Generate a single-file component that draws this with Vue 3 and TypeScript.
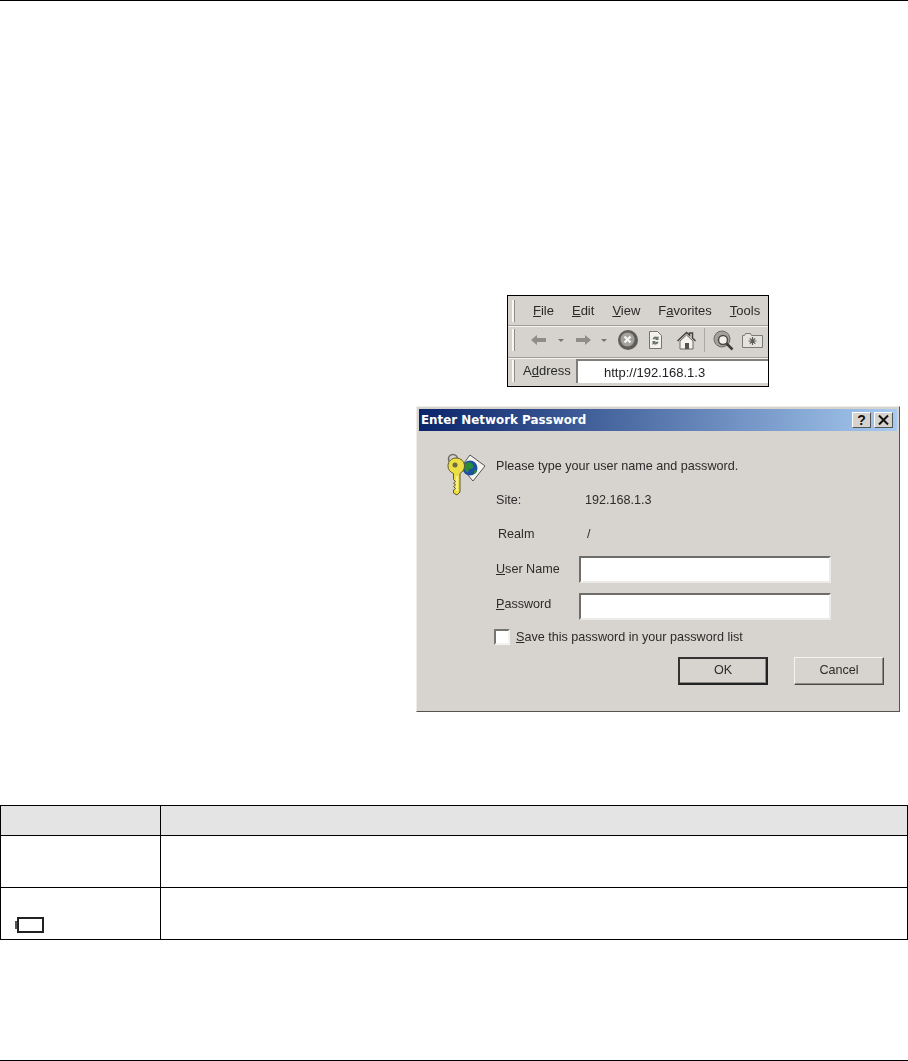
<script setup lang="ts">
const menuItems = [
  { key: 'F', rest: 'ile', before: '' },
  { key: 'E', rest: 'dit', before: '' },
  { key: 'V', rest: 'iew', before: '' },
  { key: 'a', rest: 'vorites', before: 'F' },
  { key: 'T', rest: 'ools', before: '' }
]
</script>

<template>
  <div class="page">
    <div class="browser">
      <div class="browser-inner">
        <div class="bar menu-bar">
          <span class="grip"></span>
          <span v-for="item in menuItems" :key="item.rest" class="menu-item">{{ item.before }}<u>{{ item.key }}</u>{{ item.rest }}</span>
        </div>
        <div class="bar tool-bar">
          <span class="grip"></span>
          <span class="tb tb-back">
            <svg width="16" height="12" viewBox="0 0 16 12"><path d="M0 6 6 1v3h9v4H6v3z" fill="#8f8d88" /></svg>
          </span>
          <span class="tb tb-caret-a"><i class="caret"></i></span>
          <span class="tb tb-fwd">
            <svg width="16" height="12" viewBox="0 0 16 12"><path d="M16 6 10 1v3H1v4h9v3z" fill="#8f8d88" /></svg>
          </span>
          <span class="tb tb-caret-b"><i class="caret"></i></span>
          <span class="tb tb-stop">
            <svg width="22" height="22" viewBox="0 0 22 22">
              <circle cx="11" cy="11" r="10" fill="#5f5d5a" />
              <circle cx="10.5" cy="10.5" r="7" fill="#a3a19d" />
              <path d="m7.5 7.5 6 6m0-6-6 6" stroke="#f4f4f2" stroke-width="2.4" />
            </svg>
          </span>
          <span class="tb tb-refresh">
            <svg width="13" height="18" viewBox="0 0 13 18">
              <path d="M.5.5h8l4 4v13H.5z" fill="#f2f1ee" stroke="#77756f" />
              <path d="M3.5 8a3.2 3.2 0 0 1 5-2l1-1v4H6l1.200-1.100A1.800 1.800 0 0 0 5 8.500zM9.500 11a3.200 3.200 0 0 1-5 2l-1 1v-4H7l-1.200 1.100a1.800 1.800 0 0 0 2.200-.6z" fill="#6e7569" />
            </svg>
          </span>
          <span class="tb tb-home">
            <svg width="19" height="19" viewBox="0 0 19 19">
              <path d="M.5 10 9.500 1.500l3 2.800V2h3v5l3 3" fill="none" stroke="#45433f" stroke-width="1.500" />
              <path d="M3 10v8h13v-8L9.500 4z" fill="#f3f2ee" stroke="#6b6964" />
              <rect x="8" y="12" width="4" height="6" fill="#55534f" />
            </svg>
          </span>
          <span class="tb tb-sep"></span>
          <span class="tb tb-search">
            <svg width="21" height="21" viewBox="0 0 21 21">
              <circle cx="9" cy="9" r="8" fill="#a4a29d" stroke="#6d6b66" />
              <circle cx="10" cy="10" r="4.500" fill="#f1f0ec" stroke="#4c4a47" stroke-width="1.500" />
              <path d="m13.500 13.500 6 6" stroke="#3e3c39" stroke-width="2.500" />
            </svg>
          </span>
          <span class="tb tb-fav">
            <svg width="21" height="15" viewBox="0 0 21 15">
              <path d="M.5 14.500v-12h2l1-2h5l1 2h11v12z" fill="#e4e2dd" stroke="#7c7a75" />
              <path d="M10.500 4v8M6.500 8h8M7.800 5.300l5.400 5.400m0-5.400-5.400 5.400" stroke="#5d5b57" stroke-width="1.200" />
            </svg>
          </span>
        </div>
        <div class="bar address-bar">
          <span class="grip"></span>
          <span class="address-label">A<u>d</u>dress</span>
          <div class="address-input">http://192.168.1.3</div>
        </div>
      </div>
    </div>

    <div class="dialog">
      <div class="dialog-inner">
        <div class="title-bar">
          <span class="title-text">Enter Network Password</span>
          <span class="title-btn">?</span>
          <span class="title-btn close">
            <svg width="11" height="10" viewBox="0 0 11 10"><path d="m1 .5 9 9m0-9-9 9" stroke="#111" stroke-width="2" /></svg>
          </span>
        </div>

        <div class="dialog-body">
          <div class="intro">
            <svg class="key-icon" width="50" height="56" viewBox="0 0 50 56">
              <path d="M21 25 30 13l15 11-12 15z" fill="#f4f3ef" stroke="#55534f" />
              <circle cx="30" cy="26" r="7.500" fill="#1c4fa0" />
              <path d="M25 22c3-3 7-2 8 1s-1 4-3 4-1 4-3 3-4-5-2-8zM34 29c1-1 3-1 3 0s-2 3-3 3z" fill="#2c8a3c" />
              <circle cx="13" cy="17" r="4.500" fill="none" stroke="#6c6a65" stroke-width="1.500" />
              <path d="M16 16c5 0 8.500 3.500 8.500 8 0 3.500-2 6-4.500 7.500V50l-3 3-3.500-2v-3l2-1.500-2-2 2-1.500-2-2 2-1.500-2-2v-6C10 30 8 27.500 8 24c0-4.500 3.500-8 8-8z" fill="#ecdf45" stroke="#5d5a28" />
              <circle cx="15" cy="23" r="2.500" fill="#6b6a45" />
              <path d="M17 34v15" stroke="#fbf6a8" stroke-width="1.500" />
            </svg>
            <span class="intro-text">Please type your user name and password.</span>
          </div>

          <div class="info-row site-row">
            <span class="info-label">Site:</span>
            <span>192.168.1.3</span>
          </div>
          <div class="info-row realm-row">
            <span class="info-label">Realm</span>
            <span>/</span>
          </div>

          <div class="field-row user-row">
            <label class="field-label"><u>U</u>ser Name</label>
            <div class="field-input"></div>
          </div>
          <div class="field-row pass-row">
            <label class="field-label"><u>P</u>assword</label>
            <div class="field-input"></div>
          </div>

          <div class="check-row">
            <span class="check-box"></span>
            <span><u>S</u>ave this password in your password list</span>
          </div>

          <div class="button-row">
            <span class="btn default">OK</span>
            <span class="btn">Cancel</span>
          </div>
        </div>
      </div>
    </div>

    <table class="doc-table">
      <colgroup>
        <col class="col-a" />
        <col />
      </colgroup>
      <tbody>
        <tr class="head-row"><td></td><td></td></tr>
        <tr class="body-row"><td></td><td></td></tr>
        <tr class="body-row">
          <td class="battery-cell">
            <svg class="battery" width="30" height="16" viewBox="0 0 30 16">
              <path d="M1 4h3v8H1z" fill="#555" />
              <rect x="4" y="1" width="25" height="14" fill="#fff" stroke="#222" stroke-width="2" />
            </svg>
          </td>
          <td></td>
        </tr>
      </tbody>
    </table>
  </div>
</template>

<style>
html,
body {
  margin: 0;
  background: #fff;
}
</style>

<style scoped>
.page {
  box-sizing: border-box;
  height: 1061px;
  padding-top: 294px;
  border-top: 1px solid #000;
  border-bottom: 1px solid #000;
  overflow: hidden;
  font-family: "Liberation Sans", Arial, sans-serif;
}

/* browser chrome */
.browser {
  box-sizing: border-box;
  width: 262px;
  height: 92px;
  margin-left: 507px;
  border: 1px solid #000;
  background: #d6d3ce;
  overflow: hidden;
}

.browser-inner {
  filter: blur(0.4px);
  font-size: 13px;
  color: #2a2a2a;
}

.bar {
  display: flex;
  align-items: center;
  box-sizing: border-box;
}

.grip {
  flex: none;
  width: 2px;
  height: 22px;
  margin-left: 4px;
  background: #f7f6f3;
  border-right: 1px solid #8d8b86;
}

.menu-bar {
  height: 30px;
  gap: 18px;
  border-bottom: 1px solid #a19f9a;
  box-shadow: 0 1px 0 #f4f3f0;
}

.grip + .menu-item {
  margin-left: 0;
}

.tool-bar {
  height: 31px;
  padding-bottom: 3px;
}

.tool-bar .grip {
  margin-right: 12px;
}

.tb {
  display: flex;
  flex: none;
  align-items: center;
  justify-content: center;
}

.tb-back { width: 23px; }
.tb-caret-a { width: 22px; }
.tb-fwd { width: 21px; }
.tb-caret-b { width: 22px; }
.tb-stop { width: 26px; }
.tb-refresh { width: 28px; }
.tb-home { width: 34px; }
.tb-search { width: 34px; }
.tb-fav { width: 25px; }

.tb-sep {
  width: 1px;
  height: 24px;
  margin: 0 1px;
  background: #a9a7a2;
}

.caret {
  width: 0;
  height: 0;
  border-left: 3px solid transparent;
  border-right: 3px solid transparent;
  border-top: 3px solid #77756f;
}

.address-bar {
  height: 29px;
  padding-bottom: 3px;
  border-top: 1px solid #a19f9a;
  box-shadow: inset 0 1px 0 #f4f3f0;
}

.address-bar .grip {
  height: 22px;
}

.address-label {
  margin-left: 8px;
  width: 53px;
  flex: none;
}

.address-input {
  flex: 1;
  align-self: flex-end;
  height: 24px;
  padding-left: 26px;
  line-height: 23px;
  background: #fff;
  border-top: 2px solid #807e79;
  border-left: 2px solid #807e79;
  box-sizing: border-box;
  color: #222;
}

/* password dialog */
.dialog {
  box-sizing: border-box;
  width: 484px;
  height: 306px;
  margin: 19px 0 0 416px;
  border: 1px solid;
  border-color: #eeede9 #55534f #55534f #eeede9;
  background: #d7d4cf;
  font-size: 12.6px;
  color: #2b2b2b;
}

.dialog-inner {
  height: 100%;
  padding: 2px;
  box-sizing: border-box;
  filter: blur(0.35px);
}

.title-bar {
  display: flex;
  align-items: center;
  height: 22px;
  padding: 0 4px 0 2px;
  background: linear-gradient(90deg, #0a246a, #a6caf0);
}

.title-text {
  flex: 1;
  font-family: "DejaVu Sans", sans-serif;
  font-size: 11.9px;
  font-weight: 700;
  color: #fff;
}

.title-btn {
  display: flex;
  align-items: center;
  justify-content: center;
  box-sizing: border-box;
  width: 19px;
  height: 16px;
  background: #d6d3ce;
  border: 1px solid;
  border-color: #fff #555 #555 #fff;
  font-size: 14px;
  font-weight: 700;
  color: #111;
}

.title-btn.close {
  margin-left: 3px;
}

.dialog-body {
  padding: 16px 13px 0 26px;
}

.intro {
  display: flex;
  height: 45px;
}

.key-icon {
  flex: none;
  margin: -5px 6px 0 -5px;
}

.intro-text {
  margin-top: 11px;
  line-height: 16px;
}

.info-row {
  display: flex;
  height: 16px;
  line-height: 16px;
  margin-left: 51px;
}

.info-label {
  flex: none;
  width: 89px;
}

.realm-row {
  margin-top: 18px;
  padding-left: 2px;
}

.field-row {
  display: flex;
  align-items: center;
  height: 26px;
  margin-left: 51px;
}

.user-row {
  margin-top: 14px;
}

.pass-row {
  margin-top: 11px;
}

.pass-row .field-label {
  margin-bottom: 5px;
}

.field-label {
  flex: none;
  width: 83px;
}

.field-input {
  box-sizing: border-box;
  width: 252px;
  height: 27px;
  background: #fff;
  border: 2px solid;
  border-color: #6f6d69 #ecebe7 #ecebe7 #6f6d69;
}

.check-row {
  display: flex;
  align-items: center;
  gap: 6px;
  height: 16px;
  margin: 10px 0 0 49px;
}

.check-box {
  box-sizing: border-box;
  width: 16px;
  height: 16px;
  background: #fff;
  border: 2px solid;
  border-color: #77756f #f4f3ef #f4f3ef #77756f;
}

.button-row {
  display: flex;
  justify-content: flex-end;
  gap: 26px;
  margin-top: 12px;
}

.btn {
  box-sizing: border-box;
  width: 90px;
  height: 28px;
  line-height: 25px;
  text-align: center;
  background: #d7d4cf;
  border: 1px solid;
  border-color: #f4f3ef #4c4a47 #4c4a47 #f4f3ef;
  box-shadow: inset -1px -1px 0 #8d8b86;
}

.btn.default {
  border: 2px solid #222;
  border-color: #333 #222 #222 #333;
  line-height: 23px;
}

/* table below the figure */
.doc-table {
  width: 908px;
  height: 135px;
  margin-top: 93px;
  border-collapse: collapse;
  table-layout: fixed;
}

.doc-table td {
  padding: 0;
  border: 1px solid #000;
}

.col-a {
  width: 160px;
}

.head-row {
  height: 30px;
  background: #e4e4e4;
}

.body-row {
  height: 52px;
}

.battery-cell {
  vertical-align: bottom;
  padding: 0 0 6px 13px !important;
}

.battery {
  display: block;
  filter: blur(0.4px);
}
</style>
